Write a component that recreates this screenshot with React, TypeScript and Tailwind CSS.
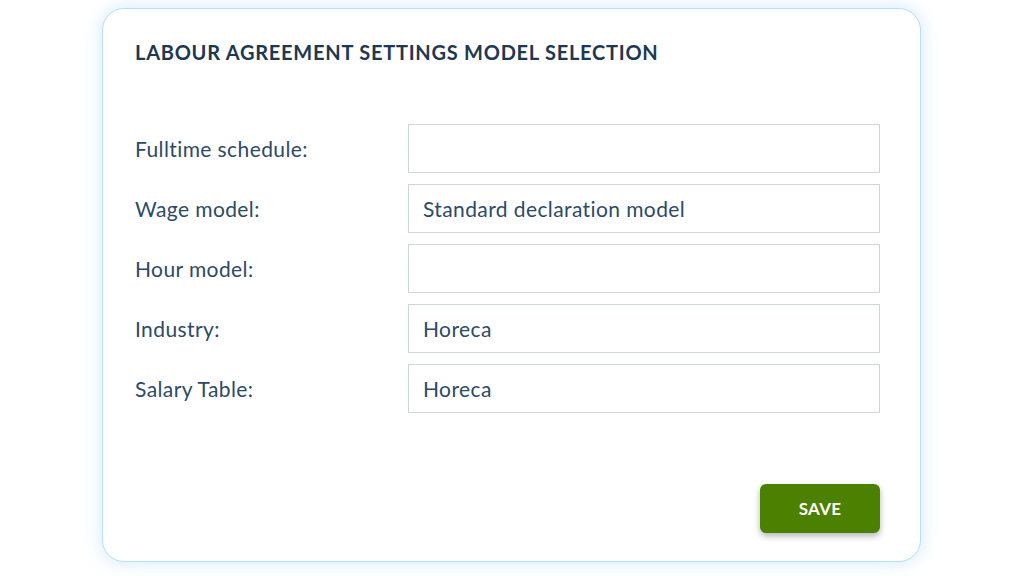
const rows = [
  { label: "Fulltime schedule:", value: "" },
  { label: "Wage model:", value: "Standard declaration model" },
  { label: "Hour model:", value: "" },
  { label: "Industry:", value: "Horeca" },
  { label: "Salary Table:", value: "Horeca" },
];

export default function App() {
  return (
    <div className="w-[1024px] h-[576px] bg-white font-['Lato',sans-serif] pt-2 pl-[102px]">
      <div className="w-[819px] h-[554px] rounded-[22px] border border-[#b7defa] bg-white shadow-[0_0_18px_rgba(120,190,240,0.35)] pt-[29px] pl-8 pr-[40px] pb-[28px] flex flex-col">
        <h1 className="text-[20px] leading-7 font-bold text-[#1d3852] tracking-[0.75px]">
          LABOUR AGREEMENT SETTINGS MODEL SELECTION
        </h1>
        <div className="mt-[58px] flex flex-col gap-[11px]">
          {rows.map((r) => (
            <div key={r.label} className="flex items-center">
              <label className="w-[273px] text-[21px] tracking-[0.4px] text-[#2d4a66]">{r.label}</label>
              <div className="flex-1 h-[49px] border border-[#cdd6df] flex items-center px-[14px] text-[21px] tracking-[0.4px] text-[#2d4a66]">
                {r.value}
              </div>
            </div>
          ))}
        </div>
        <div className="mt-auto flex justify-end">
          <button className="w-[120px] h-[49px] rounded-[6px] bg-[#4b8000] text-white text-[17px] tracking-[0.3px] font-bold shadow-[0_3px_6px_rgba(0,0,0,0.3)]">
            SAVE
          </button>
        </div>
      </div>
    </div>
  );
}
